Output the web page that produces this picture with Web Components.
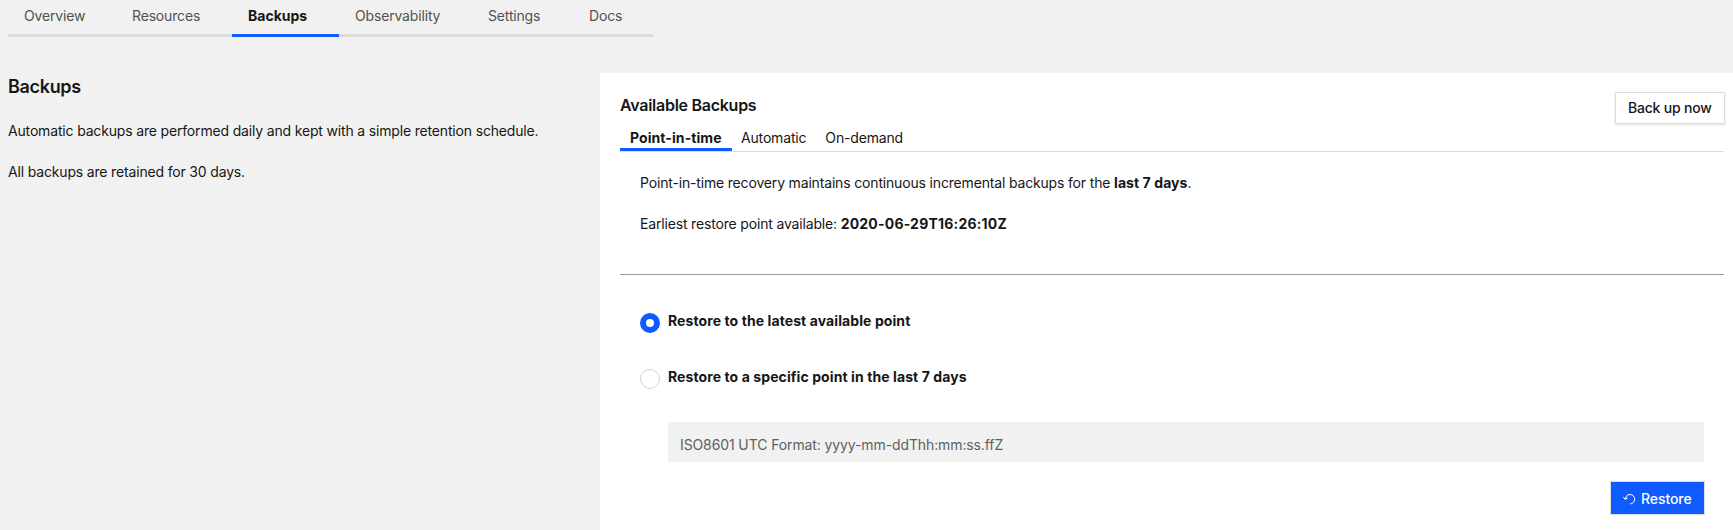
<!DOCTYPE html>
<html lang="en"><head><meta charset="utf-8"><title>Backups</title>
<style>
body{margin:0;background:#f1f1f1;color:#161616;font:14px/20px Inter,"Liberation Sans",sans-serif;letter-spacing:-.168px;height:530px;overflow:hidden}
</style></head><body>
<backup-page></backup-page>
<script>
const define=(name,html)=>customElements.define(name,class extends HTMLElement{
  constructor(){super();this.attachShadow({mode:'open'}).innerHTML=html;}
});
define('nav-tab',`<style>
:host{display:block;box-sizing:border-box;height:37px;width:var(--w);padding:6px 0 0 16px;border-bottom:3px solid #dbdbdb;color:#525252;white-space:nowrap}
:host([selected]){border-color:#0f5bff;color:#161616;font-weight:700;letter-spacing:0}
</style><slot></slot>`);
define('sub-tab',`<style>
:host{display:block;box-sizing:border-box;height:23px;padding-right:19px;white-space:nowrap}
:host([selected]){width:112px;padding:0 0 0 10px;margin-right:9px;border-bottom:3px solid #0f5bff;font-weight:700;letter-spacing:.08px}
</style><slot></slot>`);
define('radio-option',`<style>
:host{display:flex;gap:8px;height:20px;font-weight:700;letter-spacing:.09px}
i{box-sizing:border-box;width:20px;height:20px;border:1px solid #d5d5d5;border-radius:50%;background:#fff}
:host([selected]) i{border:6px solid #0f5bff}
span{margin-top:-2px}
</style><i></i><span><slot></slot></span>`);
define('action-button',`<style>
:host{display:flex;box-sizing:border-box;align-items:center;height:32px;width:110px;padding-left:12px;font-weight:500;letter-spacing:-.2px;background:#fff;border:1px solid #dcdcdc;box-shadow:0 1px 2px #0002;white-space:nowrap}
:host([primary]){width:95px;height:34px;padding:1px 0 0 11px;background:#0f5bff;color:#fff;letter-spacing:-.08px;box-shadow:none}
slot[name=icon]::slotted(svg){display:block;margin:0 5px 0 1px}
</style><slot name="icon"></slot><slot></slot>`);
define('backup-page',`<style>
:host{display:block;height:530px}
nav{display:flex;padding-left:8px;height:73px}
main{display:grid;grid-template-columns:592px 1fr;height:457px;padding-left:8px}
h1,h2,p{margin:0;white-space:nowrap}
h1{font-size:18px;line-height:24px;font-weight:600;padding-top:2px;letter-spacing:-.32px}
h1+p{margin-top:22px}
p+p{margin-top:21px}
section{background:#fff;padding:19px 9px 0 20px}
header{display:flex;justify-content:space-between;height:36px}
h2{font-size:16px;line-height:24px;font-weight:600;padding-top:1px;letter-spacing:-.27px}
.tabs{display:flex;height:23px;border-bottom:1px solid #dbdbdb}
b{letter-spacing:.08px}
.stamp{letter-spacing:.2px}
.info{box-sizing:border-box;height:123px;padding:21px 20px 0;border-bottom:1px solid #9b9b9b}
.opts{padding:38px 20px 0;display:flex;flex-direction:column}
radio-option+radio-option{margin-top:36px}
.field{box-sizing:border-box;height:40px;margin:33px 0 0 28px;padding:13px 12px 0;background:#f1f1f1;color:#5f5f5f;letter-spacing:-.11px}
action-button[primary]{align-self:flex-end;margin:19px -1px 0 0}
header action-button{margin-right:-1px}
</style>
<nav><nav-tab style="--w:108px">Overview</nav-tab><nav-tab style="--w:116px">Resources</nav-tab><nav-tab selected style="--w:107px">Backups</nav-tab><nav-tab style="--w:133px">Observability</nav-tab><nav-tab style="--w:101px">Settings</nav-tab><nav-tab style="--w:81px">Docs</nav-tab></nav>
<main><aside><h1>Backups</h1><p>Automatic backups are performed daily and kept with a simple retention schedule.</p><p>All backups are retained for 30 days.</p></aside>
<section><header><h2>Available Backups</h2><action-button>Back up now</action-button></header>
<div class="tabs"><sub-tab selected>Point-in-time</sub-tab><sub-tab>Automatic</sub-tab><sub-tab>On-demand</sub-tab></div>
<div class="info"><p>Point-in-time recovery maintains continuous incremental backups for the <b>last 7 days</b>.</p><p>Earliest restore point available: <b class="stamp">2020-06-29T16:26:10Z</b></p></div>
<div class="opts"><radio-option selected>Restore to the latest available point</radio-option><radio-option>Restore to a specific point in the last 7 days</radio-option>
<div class="field">ISO8601 UTC Format: yyyy-mm-ddThh:mm:ss.ffZ</div>
<action-button primary><svg slot="icon" width="13" height="14" viewBox="0 0 13 14" fill="none" stroke="#fff"><path d="M2.3 7.2A4.7 4.7 0 1 1 7 11.9M.3 5.2l2 2.2 2.5-1.7"/></svg>Restore</action-button></div>
</section></main>`);
</script></body></html>
